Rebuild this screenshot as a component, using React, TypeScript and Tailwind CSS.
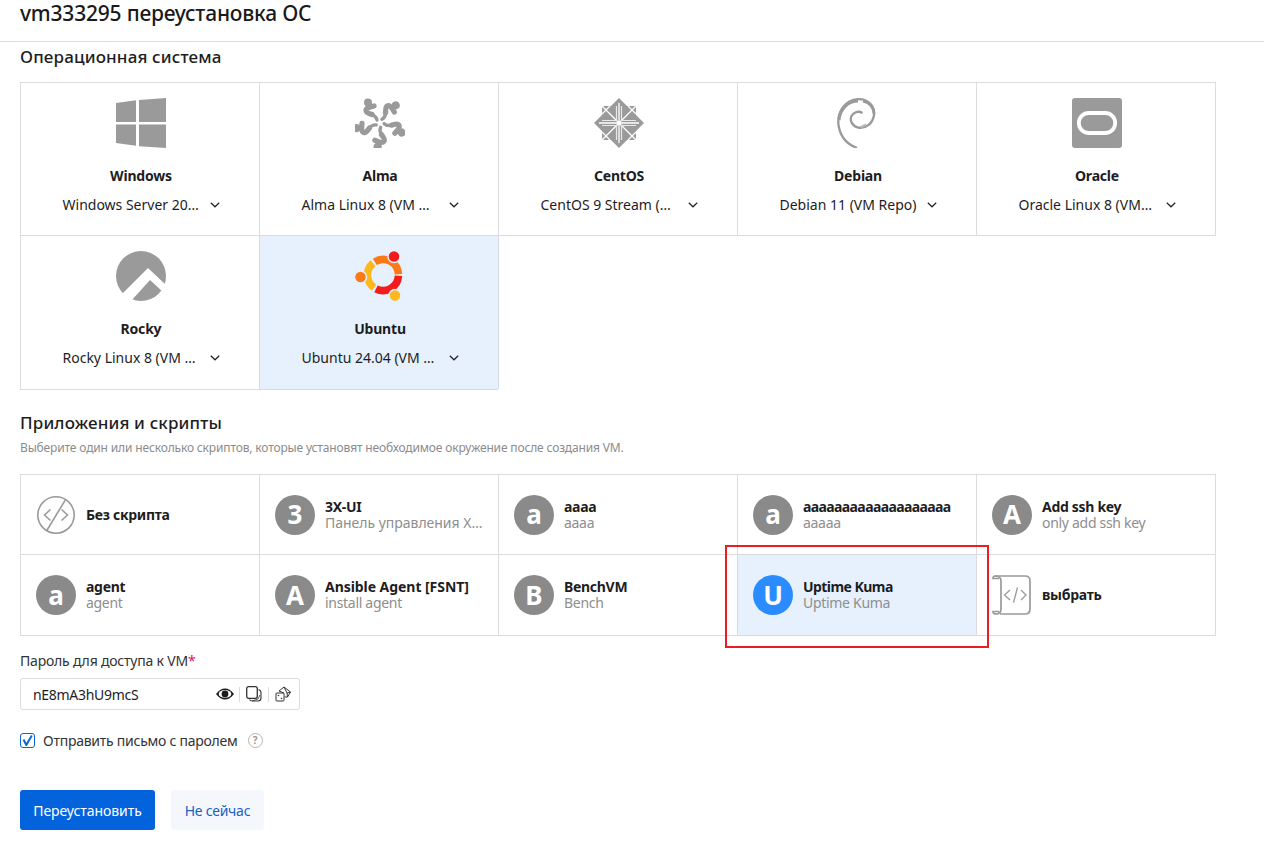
import React from "react";

const G = "#9a9a9a";
const SEL = "#e6f1fd";

function WindowsIcon() {
  return (
    <svg width="50" height="50" viewBox="0 0 50 50">
      <path d="M0 5 20 2.300V24H0zM23 1.900 50 0v24H23zM0 26.500h20V47.800L0 45zM23 26.500h27V50L23 48.200z" fill={G} />
    </svg>
  );
}

function AlmaIcon() {
  const angles = [0, 72, 144, 216, 288];
  return (
    <svg width="50" height="50" viewBox="-25 -25 50 50">
      {angles.map((a) => (
        <g key={a} transform={`rotate(${a})`}>
          <circle cx="-12" cy="-20.500" r="4" fill={G} />
          <path d="M-6 -17C-10 -16-14 -15.500-14 -12.500C-14 -10-10.500 -9.500-8 -8.500" fill="none" stroke={G} strokeWidth="5.200" strokeLinecap="round" />
          <path d="M-8 -8.500C-5.500 -7.500-3.500 -5.500-3 -3" fill="none" stroke={G} strokeWidth="3.400" strokeLinecap="round" />
        </g>
      ))}
    </svg>
  );
}

function CentosIcon() {
  return (
    <svg width="50" height="50" viewBox="-25 -25 50 50">
      <rect x="-17" y="-17" width="34" height="34" fill={G} />
      <path d="M0 -25 8 -17H-8zM0 25 8 17H-8zM-25 0-17 8V-8zM25 0 17 8V-8z" fill={G} />
      <path d="M0 -20V20M-20 0H20M-17 -17 17 17M-17 17 17 -17" stroke="#fff" strokeWidth="1.300" />
      <path d="M-2.500 -17V-2.500H-17M2.500 -17V-2.500H17M-2.500 17V2.500H-17M2.500 17V2.500H17" stroke="#e8e8e8" strokeWidth="1.200" fill="none" />
      <path d="M-9 -17-17 -9M9 -17 17 -9M-9 17-17 9M9 17 17 9" stroke="#fff" strokeWidth="1.200" fill="none" />
    </svg>
  );
}

function DebianIcon() {
  return (
    <svg width="50" height="50" viewBox="0 0 50 50">
      <path d="M24 50C13 46 7 37 5.500 27C4 14 12 2 25 1.200C35 .8 42 8 41 17C40 25 33 31 25 29.500C19 28 16.500 22.500 18.500 18C20.500 14 25.500 12.500 29.500 15" fill="none" stroke={G} strokeWidth="2.300" />
      <path d="M6 22C7 11 15 3 25 3" fill="none" stroke={G} strokeWidth="3" />
      <path d="M30 3C36 4 41 9 41 16" fill="none" stroke={G} strokeWidth="2.800" />
      <path d="M28 29 33 26.500" fill="none" stroke="#bbb" strokeWidth="2" />
    </svg>
  );
}

function OracleIcon() {
  return (
    <svg width="50" height="50" viewBox="0 0 50 50">
      <rect width="50" height="50" rx="3" fill={G} />
      <rect x="6.800" y="15" width="36.400" height="20" rx="10" fill="none" stroke="#fff" strokeWidth="3.800" />
    </svg>
  );
}

function RockyIcon() {
  return (
    <svg width="50" height="50" viewBox="0 0 50 50">
      <circle cx="25" cy="25" r="25" fill={G} />
      <path d="M6 43 32 17 52 36 47 41 34 29 15 50z" fill="#fff" />
    </svg>
  );
}

function UbuntuIcon() {
  return (
    <svg width="50" height="50" viewBox="0 0 50 50">
      <g fill="none" strokeWidth="7.500">
        <path d="M19.800 10.900A15.500 15.500 0 0 1 43.500 23.200" stroke="#fb7a18" />
        <path d="M43.500 24.800A15.500 15.500 0 0 1 21 37.800" stroke="#f21c1c" />
        <path d="M19.100 36.700A15.500 15.500 0 0 1 18 12.100" stroke="#fdb91b" />
      </g>
      <circle cx="5.500" cy="26" r="6" fill="#fb7a18" stroke={SEL} strokeWidth="1.500" />
      <circle cx="39" cy="5.500" r="6" fill="#f21c1c" stroke={SEL} strokeWidth="1.500" />
      <circle cx="40" cy="44.500" r="6" fill="#fdb91b" stroke={SEL} strokeWidth="1.500" />
    </svg>
  );
}

function Chevron() {
  return (
    <svg width="10" height="6" viewBox="0 0 10 6" className="shrink-0">
      <path d="M.8.8 5 4.800 9.200.8" fill="none" stroke="#222" strokeWidth="1.200" />
    </svg>
  );
}

function NoScriptIcon() {
  return (
    <svg width="40" height="40" viewBox="0 0 40 40" className="shrink-0" fill="none" stroke={G} strokeWidth="1.600">
      <circle cx="20" cy="20" r="18.200" />
      <path d="M30 3.800 10.500 36" />
      <path d="M14.500 14.500 8.500 20l6 5.500M25.500 14.500l6 5.500-6 5.500" />
    </svg>
  );
}

function ScrollIcon() {
  return (
    <svg width="40" height="40" viewBox="0 0 40 40" className="shrink-0" fill="none" stroke={G} strokeWidth="1.700">
      <path d="M3 1H33C36 1 38 3 38 6V34C38 37 36 39 33 39H8" />
      <path d="M3 1C5.500 1 9 2 9 6V34C9 37 7 39 4 39C2 39 1 38 1 36.500H7" />
      <path d="M3 1C1.500 1 1 2.500 1 3.500H7" />
      <path d="M18 15 12.500 20l5.500 5M29 15l5 5-5 5M25.500 12.500 21.500 27.500" strokeWidth="1.300" />
    </svg>
  );
}

function EyeIcon() {
  return (
    <svg width="18" height="12" viewBox="0 0 18 12">
      <path d="M0 6C3 2 6 .4 9 .4S15 2 18 6C15 10 12 11.600 9 11.600S3 10 0 6z" fill="#1c1c1c" />
      <ellipse cx="9" cy="6" rx="6.300" ry="3.900" fill="#fff" />
      <circle cx="9" cy="6" r="3.400" fill="#1c1c1c" />
    </svg>
  );
}

function CopyIcon() {
  return (
    <svg width="16" height="16" viewBox="0 0 16 16" fill="none" stroke="#333">
      <rect x=".7" y=".7" width="10.600" height="11.600" rx="2" strokeWidth="1.300" />
      <path d="M12.500 3.500C14 4 15 5 15 6.500V12C15 14 14 15 12 15H6.500C5 15 4 14.500 3.500 13.500" strokeWidth="1.100" />
      <path d="M6 15 12 13 14 9" strokeWidth=".8" />
    </svg>
  );
}

function DiceIcon() {
  return (
    <svg width="16" height="16" viewBox="0 0 16 16" fill="none" stroke="#333" strokeWidth="1">
      <rect x="1" y="7" width="8" height="8" rx=".8" />
      <circle cx="3.500" cy="9.500" r=".8" fill="#333" stroke="none" />
      <circle cx="6.500" cy="12.500" r=".8" fill="#333" stroke="none" />
      <path d="M4 5 9 1 15.500 6 12.500 11 9.500 11M4 5 9 7M9 1 12 7M12.500 11 12 7 15.500 6" />
    </svg>
  );
}

const osList = [
  { name: "Windows", version: "Windows Server 20…", icon: <WindowsIcon /> },
  { name: "Alma", version: "Alma Linux 8 (VM …", icon: <AlmaIcon /> },
  { name: "CentOS", version: "CentOS 9 Stream (…", icon: <CentosIcon /> },
  { name: "Debian", version: "Debian 11 (VM Repo)", icon: <DebianIcon /> },
  { name: "Oracle", version: "Oracle Linux 8 (VM…", icon: <OracleIcon /> },
  { name: "Rocky", version: "Rocky Linux 8 (VM …", icon: <RockyIcon /> },
  { name: "Ubuntu", version: "Ubuntu 24.04 (VM …", icon: <UbuntuIcon />, active: true },
];

type Script = {
  title: string;
  sub?: string;
  letter?: string;
  icon?: React.ReactNode;
  active?: boolean;
  titleTrack?: string;
  subTrack?: string;
};

const scripts: Script[] = [
  { title: "Без скрипта", icon: <NoScriptIcon /> },
  { title: "3X-UI", sub: "Панель управления X…", letter: "3", subTrack: "tracking-[-0.02px]" },
  { title: "aaaa", sub: "aaaa", letter: "a" },
  { title: "aaaaaaaaaaaaaaaaaaa", sub: "aaaaa", letter: "a", titleTrack: "tracking-[-0.62px]" },
  { title: "Add ssh key", sub: "only add ssh key", letter: "A" },
  { title: "agent", sub: "agent", letter: "a" },
  { title: "Ansible Agent [FSNT]", sub: "install agent", letter: "A", titleTrack: "tracking-[-0.05px]" },
  { title: "BenchVM", sub: "Bench", letter: "B" },
  { title: "Uptime Kuma", sub: "Uptime Kuma", letter: "U", active: true, titleTrack: "tracking-[-0.55px]" },
  { title: "выбрать", icon: <ScrollIcon /> },
];

export default function App() {
  return (
    <div className="min-h-[844px] bg-white text-[#1d1d1f] font-['Noto_Sans',sans-serif] text-[14px]">
      <header className="h-[42px] border-b border-[#dcdcdc] px-5">
        <h1 className="text-[21px] leading-[26px] font-medium tracking-[-0.2px] text-[#1a1a1a]">vm333295 переустановка ОС</h1>
      </header>

      <main className="px-5">
        <h2 className="mt-[4px] text-[17px] leading-[22px] font-medium tracking-[0.15px]">Операционная система</h2>
        <div className="mt-[14px] grid grid-cols-[repeat(5,239px)] grid-rows-[153px_154px] pr-px pb-px">
          {osList.map((os) => (
            <div
              key={os.name}
              className={`h-[calc(100%+1px)] w-[240px] border flex flex-col items-center pl-[2px] pt-[15px] ${os.active ? "bg-[#e6f1fd] border-[#d4dbe4] rounded-br-[2px]" : "border-[#dcdcdc]"}`}
            >
              {os.icon}
              <div className="mt-[18px] text-[14px] leading-[20px] font-bold tracking-[-0.2px]">{os.name}</div>
              <div className="mt-[9px] w-[157px] flex items-center justify-between">
                <span className="whitespace-nowrap leading-[20px]">{os.version}</span>
                <Chevron />
              </div>
            </div>
          ))}
        </div>

        <h2 className="mt-[22px] text-[17px] leading-[22px] font-medium tracking-[0.15px]">Приложения и скрипты</h2>
        <p className="mt-[6px] text-[12px] leading-[16px] text-[#8b8b8b] tracking-[-0.15px]">Выберите один или несколько скриптов, которые установят необходимое окружение после создания VM.</p>

        <div className="relative mt-[18px] grid grid-cols-[repeat(5,239px)] grid-rows-[80px_81px] pr-px pb-px">
          {scripts.map((s) => (
            <div
              key={s.title}
              className={`h-[calc(100%+1px)] w-[240px] border flex items-center gap-[10px] pl-[15px] ${s.active ? "bg-[#e6f1fd] border-[#d4dbe4]" : "border-[#dcdcdc]"}`}
            >
              {s.icon ?? (
                <div className={`h-[40px] w-[40px] shrink-0 rounded-full flex items-center justify-center text-white text-[26px] font-bold ${s.active ? "bg-[#2b8cff]" : "bg-[#8a8a8a]"}`}>
                  {s.letter}
                </div>
              )}
              <div className="min-w-0">
                <div className={`whitespace-nowrap leading-[16px] font-bold ${s.titleTrack ?? "tracking-[-0.3px]"}`}>{s.title}</div>
                {s.sub && <div className={`whitespace-nowrap leading-[16px] text-[#8e8e8e] ${s.subTrack ?? "tracking-[-0.3px]"}`}>{s.sub}</div>}
              </div>
            </div>
          ))}
          <div className="absolute left-[705px] top-[71px] h-[103px] w-[264px] border-2 border-[#ed1c24] pointer-events-none" />
        </div>

        <label className="mt-[15px] block text-[14px] leading-[20px] tracking-[-0.2px] text-[#333]">
          Пароль для доступа к VM<span className="text-[#e0135f]">*</span>
        </label>
        <div className="mt-[7px] h-[32px] w-[280px] rounded-[3px] border border-[#dcdcdc] flex items-center pl-[12px] pr-[8px]">
          <span className="flex-1 tracking-[-0.3px]">nE8mA3hU9mcS</span>
          <EyeIcon />
          <span className="ml-[5px] mr-[6px] h-[15px] w-px bg-[#dcdcdc]" />
          <CopyIcon />
          <span className="mx-[6px] h-[15px] w-px bg-[#dcdcdc]" />
          <DiceIcon />
        </div>

        <div className="mt-[22px] flex items-center h-[16px]">
          <span className="h-[15px] w-[15px] rounded-[3px] border-[1.5px] border-[#0d66d8] flex items-center justify-center">
            <svg width="11" height="11" viewBox="0 0 11 11">
              <path d="M1.500 4.500 4.300 10 9.800 .6" fill="none" stroke="#0d66d8" strokeWidth="2" />
            </svg>
          </span>
          <span className="ml-[8px] tracking-[-0.25px] text-[#333]">Отправить письмо с паролем</span>
          <span className="ml-[10px] h-[15px] w-[15px] rounded-full border-[1.5px] border-[#b5b5b5] text-[#9a9a9a] text-[10px] font-bold flex items-center justify-center">?</span>
        </div>

        <div className="mt-[42px] flex gap-[16px]">
          <button className="h-[40px] w-[135px] rounded-[3px] bg-[#0263dd] text-white tracking-[-0.05px]">Переустановить</button>
          <button className="h-[40px] w-[93px] rounded-[3px] bg-[#f4f8fd] text-[#1a5fc4] tracking-[-0.25px]">Не сейчас</button>
        </div>
      </main>
    </div>
  );
}
